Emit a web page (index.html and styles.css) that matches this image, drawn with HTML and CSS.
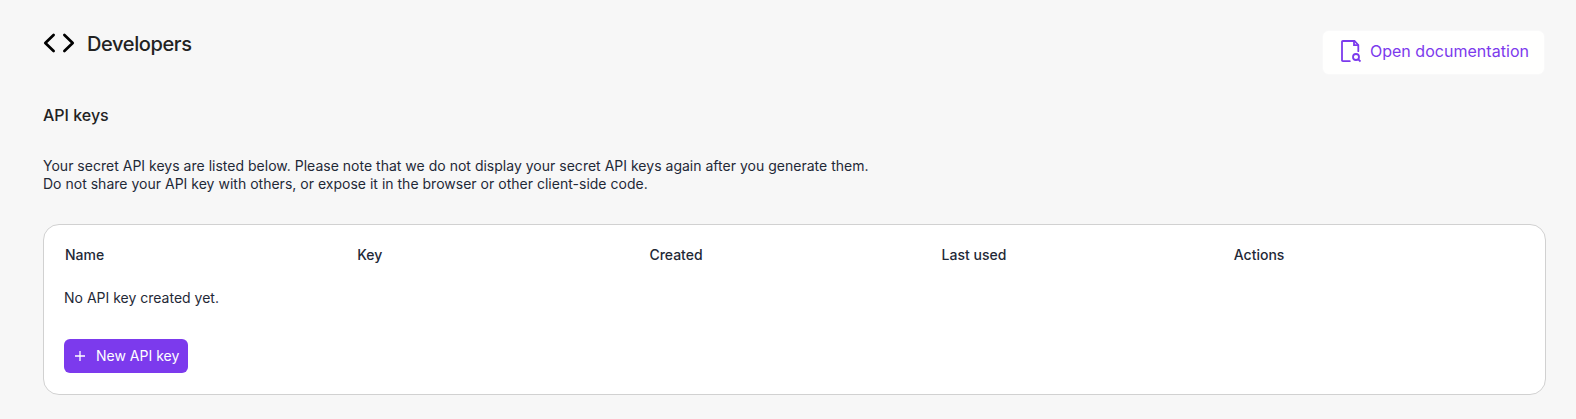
FILE: index.html
```html
<!DOCTYPE html>
<html lang="en">
<head>
<meta charset="utf-8">
<title>Developers</title>
<link rel="stylesheet" href="styles.css">
</head>
<body>
<main class="page">
  <header class="header">
    <h1 class="title">
      <svg class="code-icon" width="32" height="20" viewBox="0 0 32 20" fill="none" stroke="#000" stroke-width="2.7" stroke-linecap="round" stroke-linejoin="round"><path d="M10.6 2 2.3 10l8.3 8M21.4 2l8.3 8-8.3 8"/></svg>
      <span>Developers</span>
    </h1>
    <a class="docs-link" href="#">
      <svg width="20" height="23" viewBox="0 0 20 23" fill="none" stroke="currentColor" stroke-width="1.8"><path d="M8.8 21.2H1.9Q1 21.2 1 20.3V1.9Q1 1 1.9 1H13.5L17.3 5V11.2" stroke-linecap="round"/><path d="M13 1V5.2H17.3"/><circle cx="15" cy="17" r="3"/><path d="m17.1 19.2 2.4 2.4"/></svg>
      <span>Open documentation</span>
    </a>
  </header>
  <h2 class="subtitle">API keys</h2>
  <p class="intro">Your secret API keys are listed below. Please note that we do not display your secret API keys again after you generate them.<br>Do not share your API key with others, or expose it in the browser or other client-side code.</p>
  <section class="card">
    <div class="columns">
      <span>Name</span><span>Key</span><span>Created</span><span>Last used</span><span>Actions</span>
    </div>
    <p class="empty">No API key created yet.</p>
    <button class="new-key" type="button">
      <svg width="10" height="10" viewBox="0 0 10 10" stroke="currentColor" stroke-width="1.3"><path d="M5 0v10M0 5h10"/></svg>
      <span>New API key</span>
    </button>
  </section>
</main>
</body>
</html>
```
FILE: styles.css
```css
* { box-sizing: border-box; }
body {
  margin: 0;
  background: #f7f7f7;
  color: #1f2937;
  font: 14px/18px Inter, sans-serif;
}
h1, h2, p { margin: 0; }
.page { padding: 30px 30px 0 43px; }
.header {
  display: flex;
  justify-content: space-between;
  align-items: flex-start;
  height: 73px;
  padding-right: 2px;
}
.title {
  display: flex;
  gap: 12px;
  color: #222;
  font-size: 20px;
  font-weight: 500;
  letter-spacing: -0.38px;
  line-height: 28px;
}
.code-icon { margin-top: 3px; }
.docs-link {
  display: flex;
  align-items: center;
  gap: 9px;
  height: 43px;
  margin-top: 1px;
  padding: 0 15px 3px 18px;
  border-radius: 6px;
  background: #fffffe;
  box-shadow: 0 0 2px #fff;
  color: #7c3aed;
  font-size: 16px;
  letter-spacing: 0.03px;
  line-height: 24px;
  text-decoration: none;
}
.subtitle {
  color: #222;
  font-size: 16px;
  font-weight: 500;
  line-height: 24px;
}
.intro {
  margin-top: 30px;
  letter-spacing: 0.012px;
}
.card {
  height: 171px;
  margin-top: 31px;
  padding: 20px;
  border: 1px solid #d1d1d1;
  border-radius: 16px;
  background: #fff;
}
.columns {
  display: grid;
  grid-template-columns: repeat(5, 1fr);
  padding-left: 1px;
  margin-right: -1px;
  font-weight: 500;
  line-height: 20px;
}
.empty { margin-top: 24px; }
.new-key {
  display: flex;
  align-items: center;
  gap: 11px;
  height: 34px;
  margin-top: 32px;
  padding: 0 9px 0 11px;
  border: 0;
  border-radius: 6px;
  background: #7c3aed;
  color: #fff;
  font: inherit;
}
```
